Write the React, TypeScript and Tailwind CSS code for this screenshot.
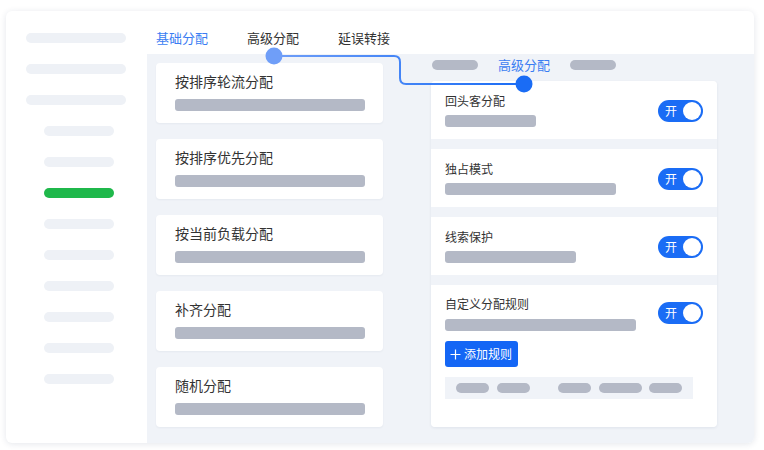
const SIDE_TOP = [0, 1, 2];
const SIDE_SUB = [0, 1, 2, 3, 4, 5, 6, 7, 8];
const ACTIVE_SUB = 2;

const BASIC_RULES = ['按排序轮流分配', '按排序优先分配', '按当前负载分配', '补齐分配', '随机分配'];

const ADVANCED = [
  { title: '回头客分配', bar: 'w-[91px]' },
  { title: '独占模式', bar: 'w-[171px]' },
  { title: '线索保护', bar: 'w-[131px]' },
];

function Toggle({ className = '' }: { className?: string }) {
  return (
    <div className={`flex h-[22px] w-[45px] shrink-0 items-center justify-between rounded-full bg-[#1a6cf5] pl-[7px] pr-[2px] ${className}`}>
      <span className="text-[12px] leading-none text-white">开</span>
      <span className="h-[18px] w-[18px] rounded-full bg-white" />
    </div>
  );
}

function Pill({ w }: { w: string }) {
  return <div className={`h-[10px] rounded-full bg-[#b4b9c6] ${w}`} />;
}

export default function App() {
  return (
    <div
      className="h-[450px] w-[764px] bg-white pl-[6px] pt-[11px]"
      style={{ fontFamily: '"Noto Sans CJK SC", "Noto Sans", sans-serif' }}
    >
      <div className="relative flex h-[432px] w-[748px] overflow-hidden rounded-[6px] bg-white shadow-[0_1px_6px_rgba(30,50,90,0.12)]">
        {/* sidebar */}
        <aside className="flex w-[141px] shrink-0 flex-col gap-[21px] pl-[20px] pt-[22px]">
          {SIDE_TOP.map((i) => (
            <div key={`t-${i}`} className="h-[10px] w-[100px] rounded-full bg-[#eef1f6]" />
          ))}
          {SIDE_SUB.map((i) => (
            <div
              key={`s-${i}`}
              className={`ml-[18px] h-[10px] w-[70px] rounded-full ${i === ACTIVE_SUB ? 'bg-[#1fb84b]' : 'bg-[#eef1f6]'}`}
            />
          ))}
        </aside>

        <main className="flex flex-1 flex-col">
          {/* tabs */}
          <div className="flex h-[43px] shrink-0 gap-[39px] pl-[9px] pt-[17px] text-[13px] leading-5 text-[#333]">
            <span className="text-[#3a7df2]">基础分配</span>
            <span>高级分配</span>
            <span>延误转接</span>
          </div>

          <div className="flex flex-1 gap-[48px] bg-[#f0f3f8] pl-[9px]">
            {/* basic rules */}
            <div className="flex w-[227px] flex-col gap-[16px] pt-[9px]">
              {BASIC_RULES.map((t) => (
                <div key={t} className="rounded-[4px] bg-white pb-3 pl-[19px] pr-[18px] pt-[8px] shadow-[0_1px_2px_rgba(30,50,90,0.05)]">
                  <div className="text-[14px] leading-5 text-[#333]">{t}</div>
                  <div className="mt-[8px] h-3 rounded-[3px] bg-[#b4b9c6]" />
                </div>
              ))}
            </div>

            {/* advanced rules */}
            <div className="flex w-[286px] flex-col pt-[1px]">
              <div className="flex h-5 items-center gap-[20px] pl-px">
                <Pill w="w-[46px]" />
                <span className="text-[13px] leading-5 text-[#3a7df2]">高级分配</span>
                <Pill w="w-[46px]" />
              </div>
              <div className="mt-[6px] flex flex-col gap-[10px] overflow-hidden rounded-[4px] shadow-[0_1px_3px_rgba(30,50,90,0.08)]">
                {ADVANCED.map((a) => (
                  <div key={a.title} className="flex h-[58px] items-start justify-between bg-white px-[14px] pt-[10px]">
                    <div className="flex flex-col">
                      <div className="text-[12px] leading-5 text-[#333]">{a.title}</div>
                      <div className={`mt-[4px] h-3 rounded-[3px] bg-[#b4b9c6] ${a.bar}`} />
                    </div>
                    <Toggle className="mt-[9px]" />
                  </div>
                ))}
                <div className="h-[142px] bg-white px-[14px] pt-[9px]">
                  <div className="flex items-center justify-between">
                    <div className="flex flex-col">
                      <div className="text-[12px] leading-5 text-[#333]">自定义分配规则</div>
                      <div className="mt-[5px] h-3 w-[191px] rounded-[3px] bg-[#b4b9c6]" />
                    </div>
                    <Toggle />
                  </div>
                  <button
                    type="button"
                    className="mt-[10px] flex h-[26px] w-[73px] items-center gap-[3px] rounded-[3px] bg-[#1466f5] pl-[5px] text-[12px] leading-none text-white"
                  >
                    <svg width="11" height="11" viewBox="0 0 11 11" aria-hidden>
                      <path d="M5.5 0.5v10M0.5 5.5h10" stroke="white" strokeWidth="1.2" />
                    </svg>
                    添加规则
                  </button>
                  <div className="mt-[10px] flex h-[22px] w-[248px] items-center bg-[#f0f3f8] pl-[11px]">
                    <Pill w="w-[33px]" />
                    <div className="ml-[8px]"><Pill w="w-[33px]" /></div>
                    <div className="ml-[28px]"><Pill w="w-[33px]" /></div>
                    <div className="ml-[8px]"><Pill w="w-[43px]" /></div>
                    <div className="ml-[7px]"><Pill w="w-[33px]" /></div>
                  </div>
                </div>
              </div>
            </div>
          </div>
        </main>

        {/* connector from the tab to the advanced panel */}
        <svg className="pointer-events-none absolute left-0 top-0" width="748" height="432" aria-hidden>
          <defs>
            <linearGradient id="wire" x1="0" x2="1" y1="0" y2="0">
              <stop offset="0" stopColor="#6f9ef8" />
              <stop offset="1" stopColor="#1a6cf5" />
            </linearGradient>
          </defs>
          <path
            d="M268 45 H388 Q394 45 394 51 V67 Q394 73 400 73 H518"
            fill="none"
            stroke="url(#wire)"
            strokeWidth="2"
          />
          <circle cx="268" cy="45" r="8.5" fill="#6f9ef8" />
          <circle cx="518" cy="73" r="8.5" fill="#1a6cf5" />
        </svg>
      </div>
    </div>
  );
}
